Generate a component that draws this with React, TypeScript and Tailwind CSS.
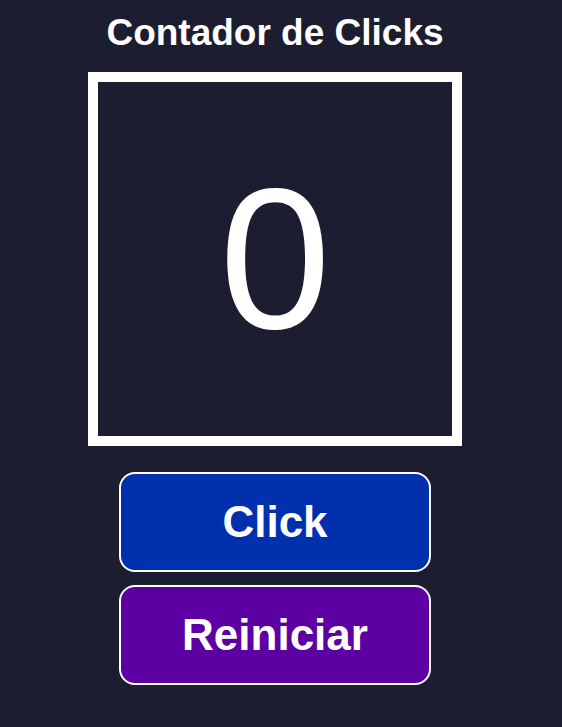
import React, { useState } from "react";

export default function App() {
  const [count, setCount] = useState(0);
  return (
    <div className="min-h-[727px] w-full bg-[#1c1d31]" style={{ fontFamily: '"Liberation Sans", Arial, sans-serif' }}>
      <div className="flex w-[550px] flex-col items-center pt-[12px]">
        <h1 className="text-[37px] font-bold leading-[42px] text-white">Contador de Clicks</h1>
        <div className="mt-[18px] flex h-[374px] w-[374px] items-center justify-center border-[10px] border-white">
          <span className="text-[200px] leading-none text-white">{count}</span>
        </div>
        <button
          onClick={() => setCount(count + 1)}
          className="mt-[26px] flex h-[100px] w-[312px] items-center justify-center rounded-[16px] border-2 border-white bg-[#0030ae] text-[44px] font-bold text-white"
        >
          Click
        </button>
        <button
          onClick={() => setCount(0)}
          className="mt-[13px] flex h-[100px] w-[312px] items-center justify-center rounded-[16px] border-2 border-white bg-[#5c00a3] text-[44px] font-bold text-white"
        >
          Reiniciar
        </button>
      </div>
    </div>
  );
}
